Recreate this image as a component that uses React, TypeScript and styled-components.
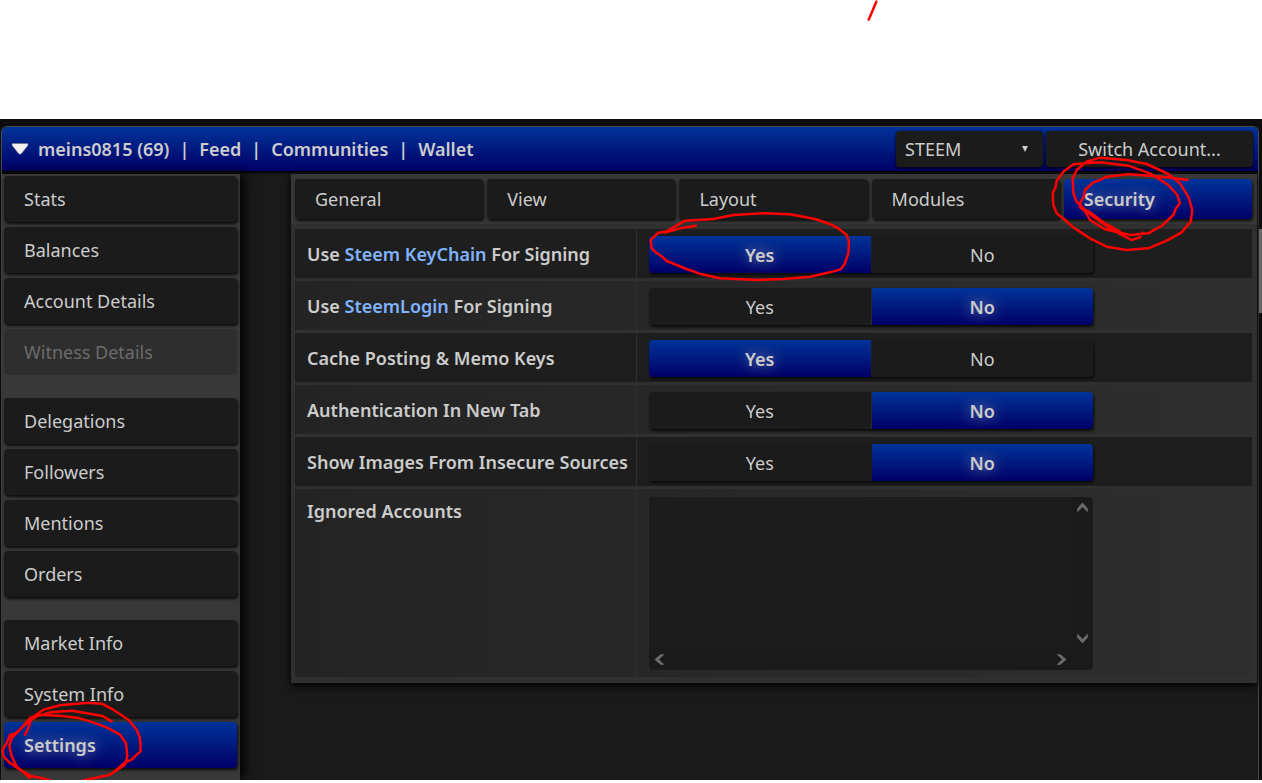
import React from "react";
import styled, { createGlobalStyle, css } from "styled-components";

const GlobalStyle = createGlobalStyle`
  *, *::before, *::after { box-sizing: border-box; }
  body {
    margin: 0;
    background: #fff;
    color: #ccc;
    font-family: "Noto Sans", "Open Sans", sans-serif;
    font-size: 18px;
    line-height: 24px;
  }
  button, select, textarea { font: inherit; color: inherit; }
`;

const blueFill = css`
  background: linear-gradient(#003399, #000066);
`;

const glow = css`
  font-weight: 600;
  text-shadow: 0 0 14px rgba(204, 204, 204, 0.7);
`;

const Page = styled.div`
  position: relative;
  padding-top: 119px;
  overflow: hidden;
`;

const Viewport = styled.div`
  display: flex;
  min-height: calc(100vh - 122px);
  background: #0d0d0d;
`;

const Frame = styled.div`
  flex: 1;
  display: flex;
  flex-direction: column;
  margin: 7px 0 0 1px;
  border: 1px solid #4a4a4a;
  border-bottom: 0;
  border-radius: 6px 6px 0 0;
  background: #0d0d0d;
`;

const ScrollTrack = styled.div`
  width: 3px;
  padding-top: 110px;
  background: #0d0d0d;
`;

const ScrollThumb = styled.div`
  height: 84px;
  background: #666;
`;

const Header = styled.header`
  display: flex;
  align-items: center;
  gap: 3px;
  height: 45px;
  padding: 0 5px 0 9px;
  border-radius: 5px 5px 0 0;
  border-bottom: 1px solid #000;
  ${blueFill}
`;

const MenuButton = styled.button`
  display: flex;
  width: 24px;
  padding: 0;
  border: 0;
  background: none;
`;

const HeaderNav = styled.nav`
  flex: 1;
  display: flex;
  font-weight: 600;

  a { color: inherit; text-decoration: none; }
  a + a::before { content: "|"; padding: 0 10px; }
`;

const SelectBox = styled.div`
  position: relative;
  width: 147px;

  svg { position: absolute; right: 14px; top: 14px; pointer-events: none; }
`;

const headerControl = css`
  height: 36px;
  border: 0;
  border-radius: 4px;
  background: #1b1b1b;
  box-shadow: 0 1px 3px #000;
`;

const ChainSelect = styled.select`
  ${headerControl}
  width: 100%;
  padding: 0 9px;
  appearance: none;
`;

const SwitchButton = styled.button`
  ${headerControl}
  width: 207px;
  padding: 0;
`;

const Body = styled.div`
  flex: 1;
  display: flex;
  margin-top: 2px;
  background: #1a1a1a;
`;

const Sidebar = styled.nav`
  display: flex;
  flex-direction: column;
  gap: 23px;
  width: 238px;
  padding: 2px 3px 0 2px;
  background: #383838;
  box-shadow: 4px 0 10px #000;
`;

const MenuGroup = styled.div`
  display: flex;
  flex-direction: column;
  gap: 5px;
`;

const MenuItem = styled.button<{ $active?: boolean }>`
  height: 46px;
  padding: 0 20px;
  border: 0;
  border-radius: 4px;
  background: #1b1b1b;
  box-shadow: 1px 2px 3px #0c0c0c;
  text-align: left;

  &:disabled { background: #2e2e2e; color: #6b6b6b; box-shadow: none; }
  ${(p) => p.$active && css`${blueFill} ${glow}`}
`;

const Content = styled.main`
  flex: 1;
  padding: 0 1px 0 51px;
`;

const Panel = styled.section`
  background: #303030;
  box-shadow: 0 3px 8px #000;
`;

const Tabs = styled.div`
  display: grid;
  grid-template-columns: repeat(5, 1fr);
  gap: 4px;
  padding: 5px 5px 5px 4px;
  background: #373737;
`;

const Tab = styled.button<{ $active?: boolean }>`
  height: 40px;
  padding: 0 20px;
  border: 0;
  border-radius: 4px;
  background: #1b1b1b;
  box-shadow: 1px 2px 3px #0c0c0c;
  text-align: left;
  ${(p) => p.$active && css`${blueFill} ${glow}`}
`;

const Rows = styled.div`
  display: flex;
  flex-direction: column;
  gap: 3px;
  padding: 5px 5px 6px 4px;
`;

const Row = styled.div<{ $alt?: boolean }>`
  display: flex;
  background: ${(p) => (p.$alt ? "linear-gradient(90deg, #242424, #2e2e2e)" : "#1e1e1e")};
`;

const RowLabel = styled.div`
  width: 342px;
  padding: 13px 12px 12px;
  border-right: 1px solid #303030;
  font-weight: 600;
  white-space: nowrap;

  a { color: #80b3ff; text-decoration: none; }
`;

const NotesLabel = styled(RowLabel)`
  padding-top: 10px;
`;

const RowControl = styled.div`
  flex: 1;
  padding: 7px 12px 5px;
`;

const NotesControl = styled(RowControl)`
  padding: 8px 12px 7px;
`;

const Toggle = styled.div`
  display: flex;
  gap: 1px;
  max-width: 444px;
  height: 37px;
  border-radius: 4px;
  box-shadow: 1px 2px 3px #0a0a0a;
`;

const Choice = styled.label`
  position: relative;
  flex: 1;
  display: flex;
  align-items: center;
  justify-content: center;
  background: #1b1b1b;

  &:first-child { border-radius: 4px 0 0 4px; }
  &:last-child { border-radius: 0 4px 4px 0; }
  &:has(input:checked) { ${blueFill} ${glow} }

  input { position: absolute; inset: 0; margin: 0; width: 100%; height: 100%; opacity: 0; }
`;

const NotesBox = styled.div`
  display: grid;
  grid-template-columns: 1fr 22px;
  grid-template-rows: 1fr 22px;
  max-width: 444px;
  height: 173px;
  border-radius: 4px;
  background: #1a1a1a;
  overflow: hidden;
`;

const Notes = styled.textarea`
  width: 100%;
  height: 100%;
  padding: 4px;
  border: 0;
  background: #1c1c1c;
  resize: none;
  overflow: hidden;
`;

const NotesScroll = styled.div<{ $vertical?: boolean }>`
  display: flex;
  flex-direction: ${(p) => (p.$vertical ? "column" : "row")};
  align-items: center;
  justify-content: space-between;
  padding: ${(p) => (p.$vertical ? "5px 0 4px" : "0 4px 0 5px")};
`;

const Ink = styled.svg`
  position: absolute;
  top: 0;
  left: 0;
  pointer-events: none;
`;

function Arrow({ turn }: { turn: number }) {
  return (
    <svg width="11" height="11" viewBox="0 0 11 11" aria-hidden="true">
      <path d="M5.500 .5 L10.800 6.500 V10.500 L5.500 5 L.2 10.500 V6.500 Z" fill="#6a6a6a" transform={`rotate(${turn} 5.500 5.500)`} />
    </svg>
  );
}

type Setting = { id: string; before: string; link?: string; after?: string; value: "Yes" | "No" };

const settings: Setting[] = [
  { id: "keychain", before: "Use ", link: "Steem KeyChain", after: " For Signing", value: "Yes" },
  { id: "login", before: "Use ", link: "SteemLogin", after: " For Signing", value: "No" },
  { id: "cache", before: "Cache Posting & Memo Keys", value: "Yes" },
  { id: "tab", before: "Authentication In New Tab", value: "No" },
  { id: "images", before: "Show Images From Insecure Sources", value: "No" },
];

const menu = [
  ["Stats", "Balances", "Account Details", "Witness Details"],
  ["Delegations", "Followers", "Mentions", "Orders"],
  ["Market Info", "System Info", "Settings"],
];

const tabs = ["General", "View", "Layout", "Modules", "Security"];

export default function App() {
  return (
    <Page>
      <GlobalStyle />
      <Viewport>
        <Frame>
          <Header>
            <MenuButton aria-label="Menu">
              <svg width="18" height="12" viewBox="0 0 18 12">
                <path d="M2 .5H16Q18 1 16.500 3L10.500 10.500Q9 12 7.500 10.500L1.500 3Q0 1 2 .5Z" fill="#f2f2f2" stroke="#777" strokeWidth=".6" />
              </svg>
            </MenuButton>
            <HeaderNav>
              <a href="#account">meins0815 (69)</a>
              <a href="#feed">Feed</a>
              <a href="#communities">Communities</a>
              <a href="#wallet">Wallet</a>
            </HeaderNav>
            <SelectBox>
              <ChainSelect aria-label="Blockchain" defaultValue="STEEM">
                <option>STEEM</option>
              </ChainSelect>
              <svg width="8" height="8" viewBox="0 0 8 8"><path d="M1 1H7L4 7Z" fill="#ccc" /></svg>
            </SelectBox>
            <SwitchButton>Switch Account...</SwitchButton>
          </Header>
          <Body>
            <Sidebar>
              {menu.map((group) => (
                <MenuGroup key={group[0]}>
                  {group.map((name) => (
                    <MenuItem key={name} $active={name === "Settings"} disabled={name === "Witness Details"}>
                      {name}
                    </MenuItem>
                  ))}
                </MenuGroup>
              ))}
            </Sidebar>
            <Content>
              <Panel>
                <Tabs>
                  {tabs.map((name) => (
                    <Tab key={name} $active={name === "Security"}>{name}</Tab>
                  ))}
                </Tabs>
                <Rows>
                  {settings.map((s, i) => (
                    <Row key={s.id} $alt={i % 2 === 1}>
                      <RowLabel id={`${s.id}-label`}>
                        {s.before}
                        {s.link && <a href={`#${s.id}`}>{s.link}</a>}
                        {s.after}
                      </RowLabel>
                      <RowControl>
                        <Toggle role="radiogroup" aria-labelledby={`${s.id}-label`}>
                          {["Yes", "No"].map((option) => (
                            <Choice key={option}>
                              <input type="radio" name={s.id} defaultChecked={option === s.value} />
                              {option}
                            </Choice>
                          ))}
                        </Toggle>
                      </RowControl>
                    </Row>
                  ))}
                  <Row $alt>
                    <NotesLabel as="label" htmlFor="ignored">Ignored Accounts</NotesLabel>
                    <NotesControl>
                      <NotesBox>
                        <Notes id="ignored" />
                        <NotesScroll $vertical>
                          <Arrow turn={0} />
                          <Arrow turn={180} />
                        </NotesScroll>
                        <NotesScroll>
                          <Arrow turn={270} />
                          <Arrow turn={90} />
                        </NotesScroll>
                      </NotesBox>
                    </NotesControl>
                  </Row>
                </Rows>
              </Panel>
            </Content>
          </Body>
        </Frame>
        <ScrollTrack>
          <ScrollThumb />
        </ScrollTrack>
      </Viewport>
      <Ink width="1262" height="780" fill="none" stroke="#f00" strokeLinecap="round" strokeLinejoin="round" aria-hidden="true">
        <g strokeWidth="7.500">
          <path transform="translate(840 0) scale(.33333)" d="M109 5L86 59" />
          <path transform="translate(1040 150) scale(.33333)" d="M443 90L380 82 300 75 262 73 200 80 180 90 160 97 135 120 132 140 122 155 120 172 135 183 150 210 195 238 270 255 325 250 345 238 365 228 400 195 408 175 420 160 412 135 385 105 330 70 265 47 180 37 100 43 70 65 50 93 47 110 38 130 40 165 50 190 75 210 100 232 150 265 200 290 260 300 325 295 380 272 425 247 452 215 457 180 445 140 420 100 385 72 320 42 260 30 180 23 140 35 110 60 98 85 100 130 110 155 130 175 160 200 210 235 245 255 275 270 300 262 307 248M122 172L150 187 190 217 240 245" />
          <path transform="translate(630 200) scale(.33333)" d="M198 77L150 85 105 98 125 85 165 62 250 57 310 45 400 40 480 43 555 57 600 72 625 85 650 105 657 125 655 160 645 190 632 208 600 217 540 230 460 237 385 240 270 235 215 223 170 207 110 183 97 170 75 155 65 145 62 120 85 98 130 90" />
          <path transform="translate(0 583) scale(.33333)" d="M335 415L310 400 270 392 215 383 150 388 110 400 75 425 48 450 30 456 20 480 8 500 10 520 30 540 60 560 95 580 125 585 165 597 220 600 270 588 330 575 375 545 382 520 378 480 360 455 320 433 270 415 235 405 180 398 115 395 90 405 60 440 35 465 28 490 35 520 50 550 90 585M75 455L85 435 95 405 130 380 180 367 265 359 305 362 340 380 385 410 410 440 420 465 422 505 410 515 395 530 375 538 340 568" />
        </g>
      </Ink>
    </Page>
  );
}
